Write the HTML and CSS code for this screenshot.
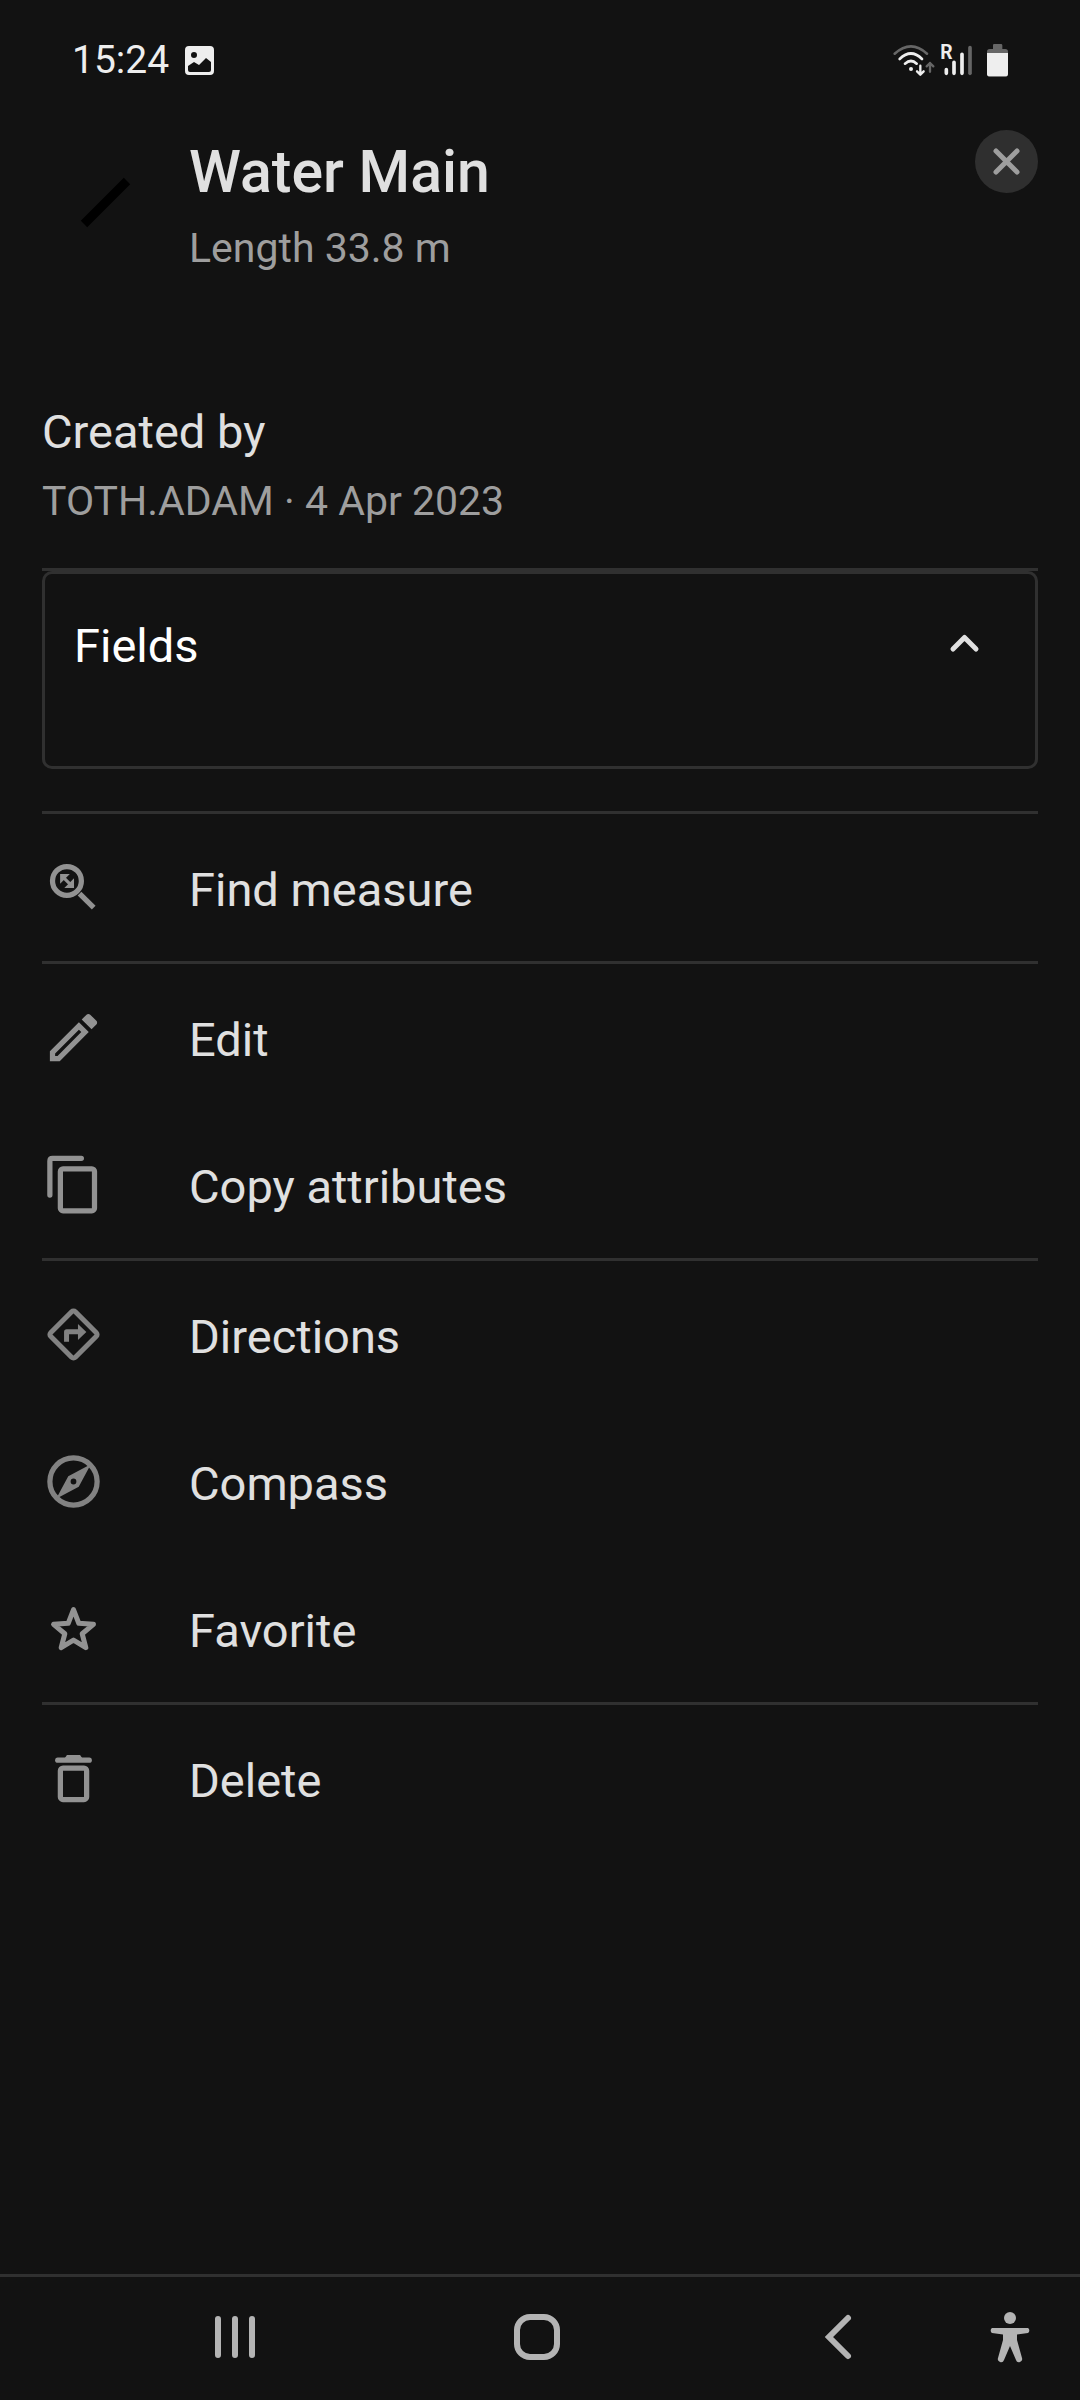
FILE: index.html
```html
<!DOCTYPE html>
<html lang="en">
<head>
  <meta charset="UTF-8" />
  <meta name="viewport" content="width=device-width, initial-scale=1" />
  <title>Water Main</title>
  <link rel="stylesheet" href="styles.css">
</head>
<body>

  <div class="status-bar">
    <span class="time">15:24</span>
    <svg class="photo-icon" viewBox="0 0 29 29">
      <path fill="#eee" fill-rule="evenodd" d="M4 0h21a4 4 0 0 1 4 4v21a4 4 0 0 1-4 4H4a4 4 0 0 1-4-4V4a4 4 0 0 1 4-4zM3 20v4q0 2 2 2h19q2 0 2-2v-8l-5-4L14 19l-5-3zM9 6a3 3 0 1 0 0 6 3 3 0 0 0 0-6z"/>
    </svg>
    <div class="status-icons">
      <svg width="42" height="33" viewBox="99 72 126 99" fill="none" stroke="#eee" stroke-width="8" stroke-linecap="round" stroke-linejoin="round">
        <path stroke="#666" d="M104 101Q153 57 201 101"/>
        <path d="M119 117Q153 84 186 117"/>
        <path d="M135 131Q153 115 170 131"/>
        <circle cx="153" cy="147" r="6" fill="#eee" stroke="none"/>
        <path stroke-width="7" d="M181 137V163M171 154L181 164L191 154"/>
        <path stroke="#666" stroke-width="7" d="M210 155V129M200 139L210 129L220 139"/>
      </svg>
      <svg width="33" height="33" viewBox="240 72 99 99" stroke="#eee" stroke-width="11" stroke-linecap="round">
        <text class="roaming" x="241" y="116">R</text>
        <path d="M259 149V160M282 127V160M306 103V160"/>
        <path stroke="#666" d="M330 83V160"/>
      </svg>
      <svg width="30" height="33" viewBox="354 72 90 99">
        <path fill="#666" d="M402 72H423Q427 72 427 76V87H436Q444 87 444 95V162Q444 170 436 170H389Q381 170 381 162V95Q381 87 389 87H399V76Q399 72 402 72Z"/>
        <path fill="#eee" d="M381 99H444V161Q444 169 436 169H389Q381 169 381 161Z"/>
      </svg>
    </div>
  </div>

  <main class="panel">
    <header class="feature">
      <svg class="symbol" viewBox="0 0 63 63">
        <path stroke="#000" stroke-width="9" d="M6 53L49 10"/>
      </svg>
      <div class="feature-text">
        <h1>Water Main</h1>
        <p class="sub">Length 33.8 m</p>
      </div>
      <button type="button" class="close" aria-label="Close">
        <svg width="27" height="27" viewBox="0 0 27 27" stroke="#9e9e9e" stroke-width="5" stroke-linecap="round">
          <path d="M3 3L24 24M24 3L3 24"/>
        </svg>
      </button>
    </header>

    <section class="created">
      <h2>Created by</h2>
      <p class="sub">TOTH.ADAM · 4 Apr 2023</p>
    </section>

    <button type="button" class="fields" aria-expanded="true">
      <span>Fields</span>
      <svg width="29" height="18" viewBox="0 0 29 18" fill="none" stroke="#e0e0e0" stroke-width="5" stroke-linecap="round" stroke-linejoin="round">
        <path d="M3 15L14.500 3.500L26 15"/>
      </svg>
    </button>

    <div class="group">
      <button type="button" class="action">
        <svg class="icon" viewBox="0 0 24 24">
          <g fill="none" stroke="currentColor" stroke-width="2">
            <circle cx="9.500" cy="9.500" r="5.500"/>
            <path d="M14.300 14.300L19.700 19.700"/>
            <path stroke-width="1.200" d="M8.300 8.300L10.700 10.700"/>
          </g>
          <path fill="currentColor" d="M6.900 6.900H10.600L6.900 10.600zM12.200 12.200H8.500L12.200 8.500z"/>
        </svg>
        <span>Find measure</span>
      </button>
    </div>

    <div class="group">
      <button type="button" class="action">
        <svg class="icon" viewBox="0 0 24 24">
          <path fill="currentColor" d="M14.060 9.020l.92.92L5.920 19H5v-.92l9.060-9.060M17.660 3c-.25 0-.51.1-.7.29l-1.830 1.830 3.750 3.750 1.830-1.830c.39-.39.39-1.020 0-1.410l-2.340-2.340c-.2-.2-.45-.29-.71-.29zm-3.600 3.190L3 17.250V21h3.750L17.810 9.940l-3.750-3.750z"/>
        </svg>
        <span>Edit</span>
      </button>
      <button type="button" class="action">
        <svg class="icon" viewBox="0 0 24 24" fill="none" stroke="currentColor" stroke-width="2" stroke-linecap="round">
          <path d="M3 16V3Q3 2 4 2H15"/>
          <rect x="7" y="6" width="13" height="16" rx="1"/>
        </svg>
        <span>Copy attributes</span>
      </button>
    </div>

    <div class="group">
      <button type="button" class="action">
        <svg class="icon dim" viewBox="0 0 24 24">
          <rect x="5.350" y="5.350" width="13.300" height="13.300" rx="1" transform="rotate(45 12 12)" fill="none" stroke="currentColor" stroke-width="1.900"/>
          <path fill="currentColor" d="M8.400 14.800V11q0-1 1-1h4.300V8l3.200 3.050-3.200 3.050V11.900h-3.400v2.900z"/>
        </svg>
        <span>Directions</span>
      </button>
      <button type="button" class="action">
        <svg class="icon dim" viewBox="0 0 24 24">
          <circle cx="12" cy="12" r="9" fill="none" stroke="currentColor" stroke-width="2"/>
          <path fill="currentColor" fill-rule="evenodd" d="M18.600 5.400L14 14L5.400 18.600L10 10zM12 10.900a1.100 1.100 0 1 0 0 2.200 1.100 1.100 0 0 0 0-2.200z"/>
        </svg>
        <span>Compass</span>
      </button>
      <button type="button" class="action">
        <svg class="icon" viewBox="0 0 24 24" fill="none" stroke="currentColor" stroke-width="1.900" stroke-linejoin="round">
          <path d="M12 4.800L14 10L19.600 10.400L15.300 14L16.700 19.300L12 16.400L7.300 19.300L8.700 14L4.400 10.400L10 10z"/>
        </svg>
        <span>Favorite</span>
      </button>
    </div>

    <div class="group">
      <button type="button" class="action">
        <svg class="icon" viewBox="0 0 24 24" fill="none" stroke="currentColor" stroke-width="2" stroke-linecap="round">
          <rect x="7" y="8" width="10" height="12" rx="1"/>
          <path d="M6 5H18"/>
          <path stroke="none" fill="currentColor" d="M8.500 4.500L9.500 3H14.500L15.500 4.500z"/>
        </svg>
        <span>Delete</span>
      </button>
    </div>
  </main>

  <nav class="nav-bar">
    <button type="button" aria-label="Recent apps">
      <svg width="42" height="44" viewBox="0 0 42 44" stroke="currentColor" stroke-width="6" stroke-linecap="round">
        <path d="M4 4V40M21 4V40M38 4V40"/>
      </svg>
    </button>
    <button type="button" aria-label="Home">
      <svg width="46" height="46" viewBox="0 0 46 46" fill="none" stroke="currentColor" stroke-width="6">
        <rect x="3" y="3" width="40" height="40" rx="13"/>
      </svg>
    </button>
    <button type="button" aria-label="Back">
      <svg width="26" height="44" viewBox="0 0 26 44" fill="none" stroke="currentColor" stroke-width="6" stroke-linecap="round">
        <path d="M23 3L4 22L23 41"/>
      </svg>
    </button>
    <button type="button" class="access" aria-label="Accessibility">
      <svg width="42" height="52" viewBox="0 0 42 52" fill="currentColor">
        <circle cx="21" cy="7" r="6"/>
        <path d="M3 17H39A3 3 0 0 1 39 22L28 23.500V29L33 47A3 3 0 0 1 27 49L21 35L15 49A3 3 0 0 1 9 47L14 29V23.500L3 22A3 3 0 0 1 3 17z"/>
      </svg>
    </button>
  </nav>

</body>
</html>
```
FILE: styles.css
```css
* {
  box-sizing: border-box;
}
body {
  margin: 0;
  min-height: 100vh;
  display: flex;
  flex-direction: column;
  background: #121212;
  color: #e0e0e0;
  font-family: Roboto, "Liberation Sans", sans-serif;
}
h1, h2, p {
  margin: 0;
  font-weight: 400;
}
button {
  padding: 0;
  border: 0;
  background: none;
  color: inherit;
  font: inherit;
  text-align: left;
}
svg {
  display: block;
  overflow: visible;
}

/* status bar */
.status-bar {
  display: flex;
  align-items: center;
  height: 120px;
  padding: 0 72px;
}
.time {
  color: #eee;
  font-size: 39px;
}
.photo-icon {
  width: 29px;
  margin-left: 16px;
}
.status-icons {
  display: flex;
  gap: 5px;
  margin-left: auto;
}
.roaming {
  fill: #eee;
  stroke: none;
  font-size: 58px;
  font-weight: 700;
}

/* feature panel */
.panel {
  padding: 0 42px;
}
.feature {
  display: flex;
  align-items: flex-start;
  padding-top: 10px;
}
.symbol {
  width: 63px;
  margin: 41px 48px 0 36px;
}
.feature-text {
  flex: 1;
}
h1 {
  font-size: 59px;
  font-weight: 500;
  line-height: 84px;
}
h2 {
  font-size: 47px;
  line-height: 70px;
}
.sub {
  color: #9e9e9e;
  font-size: 41px;
  line-height: 69px;
}
.close {
  display: flex;
  align-items: center;
  justify-content: center;
  width: 63px;
  height: 63px;
  border-radius: 50%;
  background: #2f2f2f;
}
.created {
  padding: 114px 0 32px;
  border-bottom: 3px solid #303030;
}
.fields {
  display: flex;
  align-items: flex-start;
  justify-content: space-between;
  width: 100%;
  height: 198px;
  padding: 36px 56px 0 29px;
  border: 3px solid #303030;
  border-radius: 10px;
  color: #fff;
  font-size: 47px;
  line-height: 72px;
}
.fields svg {
  margin-top: 24px;
}

/* actions */
.group {
  border-top: 3px solid #303030;
}
.fields + .group {
  margin-top: 42px;
}
.action {
  display: flex;
  align-items: center;
  gap: 84px;
  width: 100%;
  height: 147px;
  font-size: 47px;
}
.action span {
  padding-top: 4px;
}
.icon {
  width: 63px;
  color: #929292;
}
.dim {
  color: #828282;
}

/* system navigation */
.nav-bar {
  display: flex;
  height: 126px;
  margin-top: auto;
  padding: 0 49px 4px 84px;
  border-top: 3px solid #303030;
  color: #b4b4b4;
}
.nav-bar button {
  display: flex;
  flex: 1;
  align-items: center;
  justify-content: center;
}
.nav-bar .access {
  flex: 0 0 40px;
}
```
